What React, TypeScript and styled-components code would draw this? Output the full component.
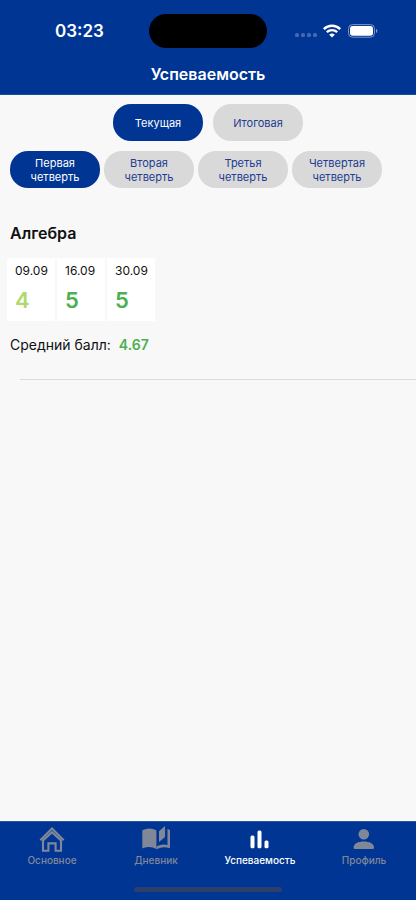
import React, { useState } from "react";
import styled, { createGlobalStyle } from "styled-components";

const blue = "#003594";
const muted = "#808799";

const GlobalStyle = createGlobalStyle`
  * { box-sizing: border-box; }
  body {
    margin: 0;
    background: #f8f8f8;
    font-family: Inter, "Liberation Sans", sans-serif;
    color: #111;
  }
  button { font: inherit; border: 0; padding: 0; cursor: pointer; }
`;

const Screen = styled.div`
  display: flex;
  flex-direction: column;
  min-height: 100vh;
`;

const Header = styled.header`
  background: ${blue};
  color: #fff;
  border-bottom: 1px solid #1d4a9e;
`;

const StatusBar = styled.div`
  display: grid;
  grid-template-columns: 1fr 118px 1fr;
  align-items: center;
  padding-top: 14px;
`;

const Time = styled.time`
  padding-left: 10px;
  text-align: center;
  font-size: 17px;
  line-height: 20px;
  font-weight: 600;
`;

const Island = styled.div`
  height: 34px;
  border-radius: 17px;
  background: #000;
`;

const Indicators = styled.div`
  display: flex;
  align-items: center;
  gap: 6px;
  padding-left: 28px;
`;

const Title = styled.h1`
  margin: 0;
  padding: 16px 0 10px;
  text-align: center;
  font-size: 16px;
  line-height: 20px;
  font-weight: 600;
`;

const Main = styled.main`
  flex: 1;
  padding-top: 9px;
`;

const Periods = styled.div`
  display: flex;
  justify-content: center;
  gap: 10px;
`;

const Quarters = styled.div`
  display: flex;
  gap: 4px;
  padding: 10px 10px 0;
`;

const Pill = styled.button<{ $active: boolean }>`
  flex: 0 1 90px;
  height: 37px;
  padding: 0 12px;
  border-radius: 18px;
  font-size: 11px;
  line-height: 14px;
  color: ${(p) => (p.$active ? "#fff" : "#233c92")};
  background: ${(p) => (p.$active ? blue : "#d9d9d9")};
`;

const Subject = styled.section`
  padding-top: 35px;
`;

const SubjectName = styled.h2`
  margin: 0;
  padding-left: 10px;
  font-size: 16px;
  line-height: 20px;
  font-weight: 600;
`;

const Marks = styled.ul`
  display: flex;
  gap: 2px;
  margin: 0;
  padding: 15px 7px 0;
  list-style: none;
`;

const MarkCard = styled.li`
  width: 48px;
  height: 63px;
  padding: 4px 0 0 8px;
  background: #fff;
`;

const MarkDate = styled.div`
  font-size: 12px;
  line-height: 18px;
`;

const Mark = styled.div<{ $color: string }>`
  padding-top: 5px;
  font-size: 22px;
  line-height: 30px;
  font-weight: 600;
  color: ${(p) => p.$color};
`;

const Average = styled.p`
  display: flex;
  gap: 8px;
  margin: 0;
  padding: 14px 10px 24px;
  font-size: 14px;
  line-height: 20px;
`;

const AverageValue = styled.strong`
  font-weight: 600;
  color: #4caf50;
`;

const Divider = styled.hr`
  margin: 0 0 0 20px;
  border: 0;
  border-top: 1px solid #dcdcdc;
`;

const Footer = styled.footer`
  background: ${blue};
  border-top: 1px solid #2b559f;
`;

const Tabs = styled.nav`
  display: grid;
  grid-template-columns: repeat(4, 1fr);
`;

const Tab = styled.button<{ $active: boolean }>`
  display: flex;
  flex-direction: column;
  align-items: center;
  padding-top: 1px;
  background: none;
  color: ${(p) => (p.$active ? "#fff" : muted)};
  font-size: 10px;
  line-height: 10px;
  font-weight: 500;
`;

const HomeIndicator = styled.div`
  width: 148px;
  height: 5px;
  margin: 22px auto 8px;
  border-radius: 3px;
  background: #2b416b;
`;

const SignalDots = () => (
  <svg width="22" height="12" viewBox="0 0 22 12" fill="#4468b2" aria-hidden="true">
    {[0, 6, 12, 18].map((x) => (
      <rect key={x} x={x} y="8" width="4" height="4" rx="1.5" />
    ))}
  </svg>
);

const Wifi = () => (
  <svg width="19" height="14" viewBox="0 0 19 14" fill="none" stroke="#fff" aria-hidden="true">
    <path d="M.8 5.1a11.9 11.9 0 0 1 16.4 0" strokeWidth="2.4" />
    <path d="M3.8 8.2a7.5 7.5 0 0 1 10.4 0" strokeWidth="2.3" />
    <path d="M9 13.6 6.2 10.7a4.1 4.1 0 0 1 5.6 0z" fill="#fff" stroke="none" />
  </svg>
);

const Battery = () => (
  <svg width="30" height="14" viewBox="0 0 30 14" aria-hidden="true">
    <rect x=".5" y=".6" width="26" height="12.6" rx="4" fill="none" stroke="#7c96ca" />
    <rect x="2" y="2.1" width="23" height="9.6" rx="2.7" fill="#fff" />
    <path d="M28 4.8q1.4.5 1.4 2.1T28 9z" fill="#7c96ca" />
  </svg>
);

const HomeIcon = () => (
  <svg width="32" height="32" viewBox="0 0 32 32" fill="none" stroke="currentColor" strokeWidth="2.1" aria-hidden="true">
    <path d="M4.3 17.3 16 5.6l11.7 11.7" />
    <path d="M7 17.4v10.4h5.4v-7.4h7.2v7.4H25V17.4l-9-8.2z" />
  </svg>
);

const DiaryIcon = () => (
  <svg width="32" height="32" viewBox="0 0 32 32" fill="currentColor" aria-hidden="true">
    <path d="M2.3 7.2Q9.5 4 16.4 7.2v18.7q-6.6-3.4-13.5-.6-.6 0-.6-.6z" />
    <path d="m19 8.2 6-5.1v11l-6 4.8z" />
    <path d="M27.5 6.1q1.6.5 2.5 1.1v17.4q0 .7-.8.5-6.1-2.2-12.8 1.1v-2.6q5.6-3 11.1-1.5z" />
  </svg>
);

const ChartIcon = () => (
  <svg width="32" height="32" viewBox="0 0 32 32" fill="currentColor" aria-hidden="true">
    <rect x="6.5" y="12.6" width="4" height="12.6" rx="1.5" />
    <rect x="13.5" y="7.6" width="4" height="17.6" rx="1.5" />
    <rect x="20.5" y="17.6" width="4" height="7.6" rx="1.5" />
  </svg>
);

const ProfileIcon = () => (
  <svg width="32" height="32" viewBox="0 0 32 32" fill="currentColor" aria-hidden="true">
    <circle cx="15.8" cy="11.2" r="5.3" />
    <path d="M5.6 24.4c0-4 4.8-6 10.2-6s10.2 2 10.2 6c0 1-.6 1.7-1.6 1.7H7.2c-1 0-1.6-.7-1.6-1.7z" />
  </svg>
);

const periods = ["Текущая", "Итоговая"];
const quarters = ["Первая", "Вторая", "Третья", "Четвертая"];
const marks = [
  { date: "09.09", value: 4, color: "#aed96c" },
  { date: "16.09", value: 5, color: "#4caf50" },
  { date: "30.09", value: 5, color: "#4caf50" },
];
const tabs = [
  { label: "Основное", Icon: HomeIcon },
  { label: "Дневник", Icon: DiaryIcon },
  { label: "Успеваемость", Icon: ChartIcon },
  { label: "Профиль", Icon: ProfileIcon },
];

export default function App() {
  const [period, setPeriod] = useState(0);
  const [quarter, setQuarter] = useState(0);
  const [tab, setTab] = useState(2);

  return (
    <Screen>
      <GlobalStyle />
      <Header>
        <StatusBar>
          <Time>03:23</Time>
          <Island />
          <Indicators>
            <SignalDots />
            <Wifi />
            <Battery />
          </Indicators>
        </StatusBar>
        <Title>Успеваемость</Title>
      </Header>
      <Main>
        <Periods>
          {periods.map((name, i) => (
            <Pill key={name} $active={i === period} aria-pressed={i === period} onClick={() => setPeriod(i)}>
              {name}
            </Pill>
          ))}
        </Periods>
        <Quarters>
          {quarters.map((name, i) => (
            <Pill key={name} $active={i === quarter} aria-pressed={i === quarter} onClick={() => setQuarter(i)}>
              {name} четверть
            </Pill>
          ))}
        </Quarters>
        <Subject>
          <SubjectName>Алгебра</SubjectName>
          <Marks>
            {marks.map((m) => (
              <MarkCard key={m.date}>
                <MarkDate>{m.date}</MarkDate>
                <Mark $color={m.color}>{m.value}</Mark>
              </MarkCard>
            ))}
          </Marks>
          <Average>
            <span>Средний балл:</span>
            <AverageValue>4.67</AverageValue>
          </Average>
          <Divider />
        </Subject>
      </Main>
      <Footer>
        <Tabs>
          {tabs.map(({ label, Icon }, i) => (
            <Tab key={label} $active={i === tab} aria-current={i === tab ? "page" : undefined} onClick={() => setTab(i)}>
              <Icon />
              {label}
            </Tab>
          ))}
        </Tabs>
        <HomeIndicator />
      </Footer>
    </Screen>
  );
}
